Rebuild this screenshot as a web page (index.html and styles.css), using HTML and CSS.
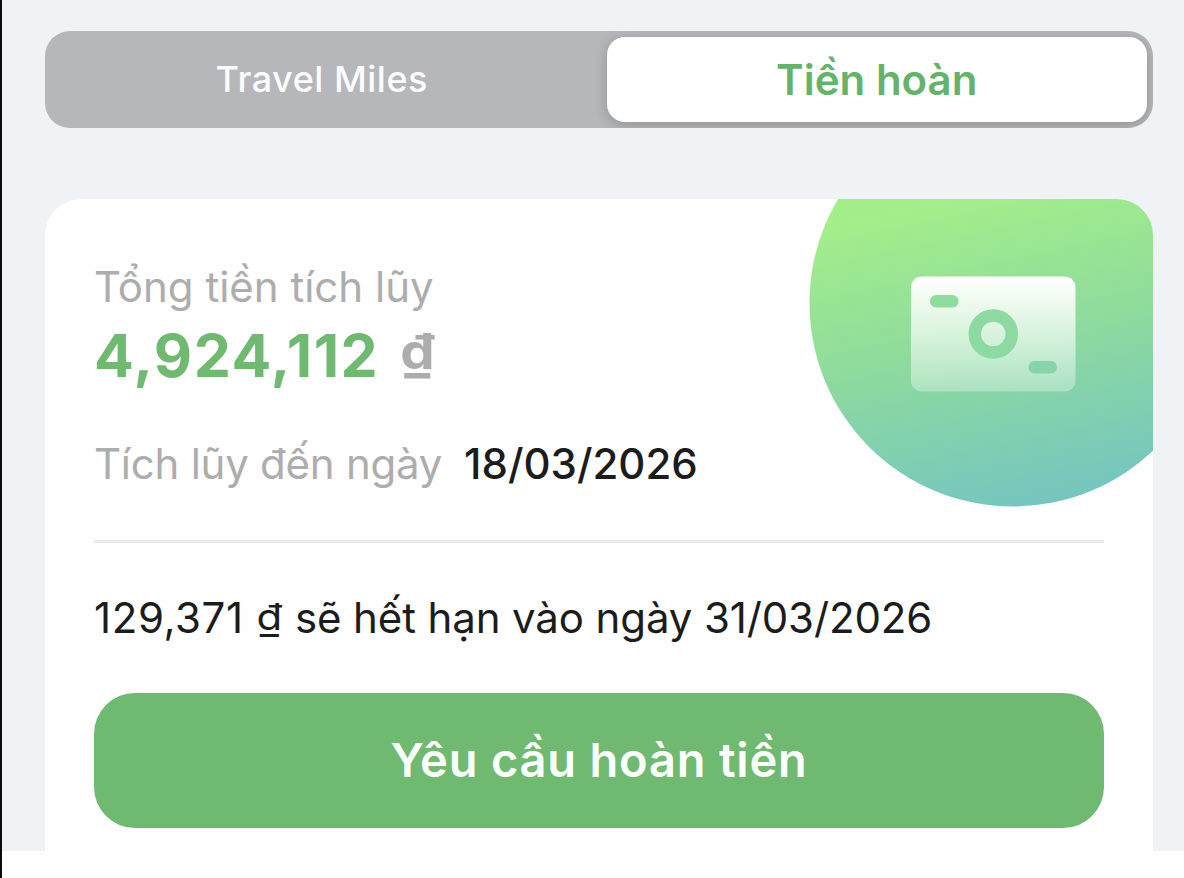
FILE: index.html
```html
<!DOCTYPE html>
<html lang="vi">
<head>
<meta charset="utf-8">
<title>Tiền hoàn</title>
<link rel="stylesheet" href="styles.css">
</head>
<body>
<main class="screen">
  <nav class="tabs">
    <div class="tab tab-idle"><span class="tab-miles">Travel Miles</span></div>
    <div class="tab tab-active"><span class="tab-cash">Tiền hoàn</span></div>
  </nav>
  <section class="card">
    <svg class="badge" width="344" height="308" viewBox="0 0 344 308" aria-hidden="true">
      <defs>
        <linearGradient id="disc" gradientUnits="userSpaceOnUse" x1="140" y1="0" x2="205" y2="305">
          <stop offset="0" stop-color="#a4ee8a"/>
          <stop offset=".45" stop-color="#8fdc9c"/>
          <stop offset="1" stop-color="#76c6bf"/>
        </linearGradient>
        <linearGradient id="note" x1="0" y1="0" x2="0" y2="1">
          <stop offset="0" stop-color="#fff"/>
          <stop offset="1" stop-color="#fff" stop-opacity=".3"/>
        </linearGradient>
      </defs>
      <circle cx="204" cy="104" r="203.5" fill="url(#disc)"/>
      <rect x="102" y="77.500" width="164.500" height="115" rx="11" fill="url(#note)"/>
      <rect x="121" y="96" width="28.500" height="12.500" rx="6" fill="#90dc9f"/>
      <circle cx="184.300" cy="135" r="18.500" fill="none" stroke="#8cd9a1" stroke-width="12.500"/>
      <rect x="219.500" y="162" width="28.500" height="12.500" rx="6" fill="#88d4aa"/>
    </svg>
    <p class="label">Tổng tiền tích lũy</p>
    <p class="amount"><span class="value">4,924,112</span><span class="currency">₫</span></p>
    <p class="until"><span class="until-label">Tích lũy đến ngày</span><span class="until-date">18/03/2026</span></p>
    <hr class="divider">
    <p class="expiry"><span class="expiry-sum">129,371</span> <span class="dong">₫</span> <span class="expiry-text">sẽ hết hạn vào ngày 31/03/2026</span></p>
    <button class="request"><span>Yêu cầu hoàn tiền</span></button>
  </section>
</main>
</body>
</html>
```
FILE: styles.css
```css
* { box-sizing: border-box; }
body { margin: 0; background: #fefefe; font-family: Inter, "Noto Sans", sans-serif; }
p { margin: 0; white-space: nowrap; }
.screen {
  width: 1184px;
  height: 878px;
  border-left: 2px solid #0b0c0e;
  padding: 31px 31px 0 43px;
  background: linear-gradient(#eff3f5, #eff3f5) 0 0 / 100% 851px no-repeat #fefefe;
  overflow: hidden;
}
.tabs {
  display: grid;
  grid-template-columns: 555.5px 540.5px;
  width: 1108px;
  height: 97px;
  padding: 6px;
  border-radius: 25px;
  background: #b6b7ba;
  overflow: hidden;
}
.tab { display: flex; align-items: center; justify-content: center; color: #fbfcfe; white-space: nowrap; }
.tab-idle { padding: 0 14px 2px 0; }
.tab-miles { font-size: 36px; font-weight: 550; letter-spacing: .5px; }
.tab-active { background: #fff; border-radius: 18px; box-shadow: 0 3px 14px rgba(0, 0, 0, .2); }
.tab-cash { color: #65b36b; font-size: 42px; font-weight: 600; }
.card {
  position: relative;
  display: flex;
  flex-direction: column;
  width: 1108px;
  height: 720px;
  margin-top: 71px;
  padding: 58px 49px 0;
  background: #fefefe;
  border-radius: 36px 36px 0 0;
  overflow: hidden;
}
.badge { position: absolute; top: 0; right: 0; }
.label { color: #adadad; font-size: 42px; line-height: 60px; }
.amount { display: flex; line-height: 77px; }
.value { color: #6fb971; font-size: 59px; font-weight: 700; letter-spacing: 1.5px; }
.currency {
  margin-left: 22px;
  color: #adadad;
  font-size: 52px;
  font-weight: 700;
  transform: translateY(-4px) scale(1.05, .94);
}
.until { display: flex; margin-top: 40px; line-height: 60px; }
.until-label { color: #adadad; font-size: 42px; letter-spacing: -.25px; }
.until-date { margin-left: 22px; color: #1c1c1c; font-size: 42px; font-weight: 500; }
.divider { width: 1010px; height: 3px; margin: 46px 0 0; border: 0; background: #e9eaeb; }
.expiry { margin-top: 45px; color: #1c1c1c; font-size: 42px; line-height: 60px; }
.expiry-sum { letter-spacing: .6px; }
.expiry-text { letter-spacing: -.12px; }
.dong { display: inline-block; margin: 0 1px; transform: translateY(-1px) scaleY(.88); }
.request {
  display: flex;
  align-items: center;
  justify-content: center;
  width: 1010px;
  height: 135px;
  margin-top: 45px;
  padding: 0 0 2px;
  border: 0;
  border-radius: 41px;
  background: #70b971;
  color: #fbfffb;
  font: 600 47px Inter, "Noto Sans", sans-serif;
  letter-spacing: .8px;
}
```
